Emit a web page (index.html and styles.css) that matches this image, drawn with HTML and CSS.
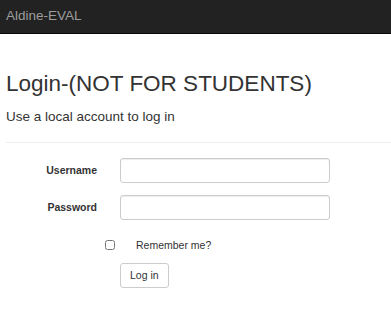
FILE: index.html
```html
<!DOCTYPE html>
<html lang="en">
<head>
<meta charset="utf-8">
<title>Log in - Aldine-EVAL</title>
<link rel="stylesheet" href="styles.css">
</head>
<body>
<header class="navbar"><span class="brand">Aldine-EVAL</span></header>
<main class="container">
  <h2 class="title">Login-(NOT FOR STUDENTS)</h2>
  <h4 class="subtitle">Use a local account to log in</h4>
  <hr class="rule">
  <form class="login-form">
    <div class="form-row">
      <label class="form-label" for="user">Username</label>
      <input class="form-input" id="user" type="text">
    </div>
    <div class="form-row">
      <label class="form-label" for="pass">Password</label>
      <input class="form-input" id="pass" type="password">
    </div>
    <div class="check-row">
      <input class="check" id="remember" type="checkbox">
      <label class="check-label" for="remember">Remember me?</label>
    </div>
    <div class="submit-row">
      <button class="btn" type="button">Log in</button>
    </div>
  </form>
</main>
</body>
</html>
```
FILE: styles.css
```css
html, body {
  margin: 0;
  padding: 0;
  background: #fff;
  color: #333;
  font-family: "Liberation Sans", Arial, sans-serif;
  font-size: 10.5px;
  line-height: 15px;
}
.navbar {
  height: 33px;
  background: #222;
  border-bottom: 1px solid #080808;
  box-sizing: content-box;
  padding: 0 6px;
}
.brand {
  display: block;
  padding-top: 8px;
  font-size: 13.5px;
  line-height: 15px;
  color: #9d9d9d;
}
.container {
  padding: 0 0 0 6px;
}
.title {
  margin: 37.4px 0 0;
  font-size: 22.5px;
  line-height: 25px;
  font-weight: 500;
  color: #333;
}
.subtitle {
  margin: 13.5px 0 0;
  font-size: 13.5px;
  line-height: 14.85px;
  font-weight: 500;
  color: #333;
}
.rule {
  margin: 17.25px 0 15px;
  border: 0;
  border-top: 1px solid #eee;
  height: 0;
}
.login-form {
  margin: 0;
}
.form-row {
  display: flex;
  align-items: flex-start;
  margin-bottom: 11.25px;
}
.form-label {
  width: 91px;
  text-align: right;
  font-weight: bold;
  padding-top: 5.25px;
  line-height: 15px;
}
.form-input {
  margin: 0 0 0 23px;
  width: 210px;
  height: 25.5px;
  box-sizing: border-box;
  border: 1px solid #ccc;
  border-radius: 3px;
  box-shadow: inset 0 1px 1px rgba(0,0,0,.075);
  padding: 4px 9px;
  font: inherit;
  background: #fff;
}
.check-row {
  display: flex;
  align-items: center;
  padding-top: 6.4px;
  padding-left: 99px;
  margin-bottom: 10px;
}
.check {
  width: 10px;
  height: 10px;
  margin: 0 21px 0 0;
}
.check-label {
  line-height: 15px;
}
.submit-row {
  padding-left: 114px;
}
.btn {
  margin: 0;
  height: 25px;
  box-sizing: border-box;
  padding: 0 9px;
  border: 1px solid #ccc;
  border-radius: 3px;
  background: #fff;
  color: #333;
  font: inherit;
  line-height: 15px;
}
```
